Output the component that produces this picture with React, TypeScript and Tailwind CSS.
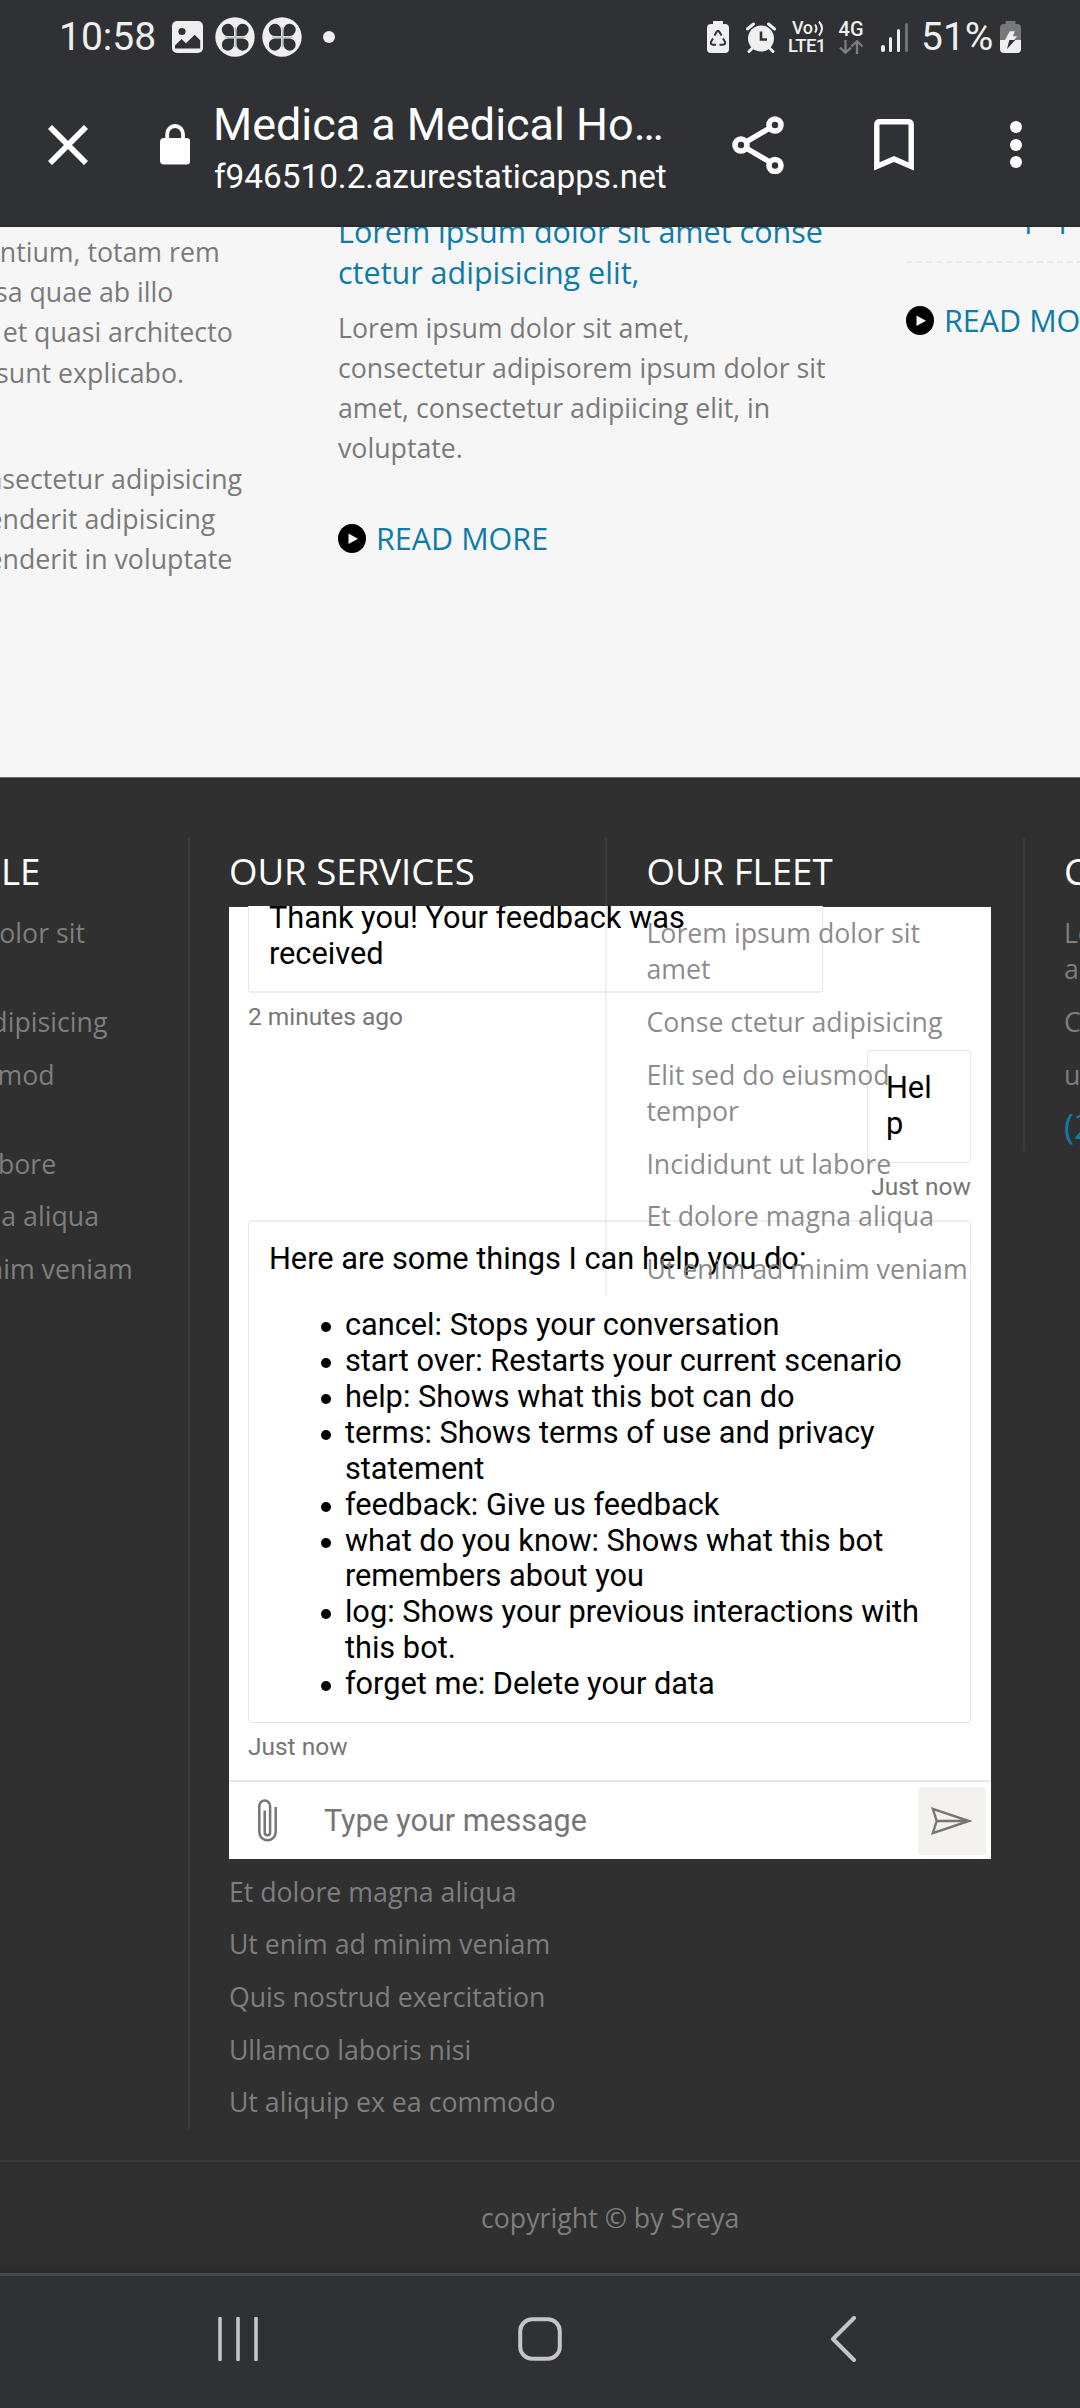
import React from 'react';

const SANS = "font-['Open_Sans',sans-serif]";
const ROBOTO = 'font-[Roboto,sans-serif]';

function Clover({ className }: { className: string }) {
  return (
    <svg viewBox="0 0 40 40" className={`h-[40px] w-[40px] shrink-0 ${className}`}>
      <circle cx="20" cy="20" r="19.7" fill="#efefef" />
      <g fill="#303135">
        <path d="M19 19v-5.500a6.100 6.100 0 1 0-5.500 5.500z" />
        <path d="M21.500 19v-5.500a6.100 6.100 0 1 1 5.500 5.500z" />
        <path d="M19 21.500v5.500a6.100 6.100 0 1 1-5.500-5.500z" />
        <path d="M21.500 21.500v5.500a6.100 6.100 0 1 0 5.500-5.500z" />
      </g>
      <path d="M20.200 10v20.500M10 20.200h20.500" stroke="#9a9b9c" strokeWidth="0.800" />
    </svg>
  );
}

function StatusBar() {
  return (
    <div className="flex h-[74px] items-center pr-[59px] pl-[59px] text-[39px] leading-[40px] text-[#efefef]">
      <span className="w-[97px]">10:58</span>
      <svg viewBox="0 0 31 32" className="ml-4 h-8 w-[31px]">
        <rect width="31" height="32" rx="5" fill="#efefef" />
        <circle cx="10" cy="10.500" r="3.600" fill="#303135" />
        <path d="M3 24.500l6.500-6.500 4.500 4.300 8.700-8.500 5.500 5.500v8.200H3z" fill="#303135" />
      </svg>
      <Clover className="ml-3" />
      <Clover className="ml-[7px]" />
      <span className="ml-[21px] h-3 w-3 rounded-full bg-[#efefef]" />
      <div className="ml-auto flex items-center">
        <svg viewBox="0 0 22 32" className="h-8 w-[22px]">
          <path d="M6 0h10v3h2a4 4 0 0 1 4 4v21a4 4 0 0 1-4 4H4a4 4 0 0 1-4-4V7a4 4 0 0 1 4-4h2z" fill="#efefef" />
          <path
            d="M7.500 14.500l2-3.400q1.500-2 3 0l2 3.400M16 17.500l2 3.300q.800 2.700-2 2.900h-3.500M9 23.700H6q-2.800-.200-2-2.900l2-3.300"
            fill="none"
            stroke="#303135"
            strokeWidth="2"
          />
        </svg>
        <svg viewBox="0 0 30 31" className="ml-[17px] h-[31px] w-[30px]">
          <path d="M1.500 7l6-5M28.500 7l-6-5M3 29.500l4-4M27 29.500l-4-4" stroke="#efefef" strokeWidth="3" strokeLinecap="round" />
          <circle cx="15" cy="16.500" r="13" fill="#efefef" />
          <path d="M15 9.500v8h6" fill="none" stroke="#303135" strokeWidth="2.600" />
        </svg>
        <div className="ml-[12px] flex w-[38px] flex-col font-medium">
          <span className="flex items-center pl-[4px] text-[18px] leading-[18px] tracking-[-0.5px]">
            Vo
            <svg viewBox="0 0 10 17" className="ml-px h-[17px] w-[10px]">
              <path d="M1 4.500q3 4 0 8M5 1.500q6 7 0 14" fill="none" stroke="#efefef" strokeWidth="2" />
            </svg>
          </span>
          <span className="text-[18.5px] leading-[18px] tracking-[-0.6px]">LTE1</span>
        </div>
        <div className="ml-3 flex w-[26px] flex-col items-center">
          <span className="text-[20px] leading-[17px] font-medium">4G</span>
          <svg viewBox="0 0 24 14" className="mt-0.5 h-[14px] w-6">
            <path d="M6.500 0v12.500M1 7.500l5.500 5.300L12 7.500M18 14V1.500M12.500 6.500L18 1.200l5.500 5.300" fill="none" stroke="#7c7d80" strokeWidth="2.300" />
          </svg>
        </div>
        <div className="ml-[17px] flex h-[29px] items-end gap-[4.3px]">
          <i className="h-[7px] w-[3.5px] rounded-full bg-[#efefef]" />
          <i className="h-[15px] w-[3.5px] rounded-full bg-[#efefef]" />
          <i className="h-[23px] w-[3.5px] rounded-full bg-[#efefef]" />
          <i className="h-[29px] w-[3.5px] rounded-full bg-[#707174]" />
        </div>
        <span className="ml-[13px] w-[73px]">51%</span>
        <svg viewBox="0 0 21 32" className="ml-[6px] h-8 w-[21px]">
          <path d="M5.500 0h10v3h1.500a4 4 0 0 1 4 4v12H0V7a4 4 0 0 1 4-4h1.500z" fill="#77787a" />
          <path d="M0 19h21v9a4 4 0 0 1-4 4H4a4 4 0 0 1-4-4z" fill="#efefef" />
          <path d="M9.800 10.300h5l-2 5h4.200L14 19H5z" fill="#efefef" />
          <path d="M9.300 19h6L7 28z" fill="#303135" />
        </svg>
      </div>
    </div>
  );
}

function Toolbar() {
  return (
    <div className="flex h-[141px] items-center pl-12 text-white">
      <svg viewBox="0 0 40 40" className="h-10 w-10">
        <path d="M2 2l36 36M38 2L2 38" stroke="#fff" strokeWidth="5.800" />
      </svg>
      <svg viewBox="0 0 30 40" className="ml-[72px] mb-px h-[41px] w-[30px]">
        <path d="M7.200 15V9.500a7.900 8 0 0 1 15.800 0V15" fill="none" stroke="#fff" strokeWidth="3.800" />
        <rect y="13.500" width="30.500" height="26.500" rx="4" fill="#fff" />
      </svg>
      <div className="mt-[9px] ml-[23px] flex w-[460px] flex-col whitespace-nowrap">
        <span className="text-[44.9px] leading-[50px]">Medica a Medical Ho…</span>
        <span className="mt-[5px] pl-px text-[33.3px] leading-[44px]">f946510.2.azurestaticapps.net</span>
      </div>
      <svg viewBox="0 0 52 58" className="ml-[59px] h-[58px] w-[52px]">
        <path d="M43 9L9 29l34 20" fill="none" stroke="#fff" strokeWidth="5.400" />
        <g fill="#303135" stroke="#fff" strokeWidth="5.600">
          <circle cx="43" cy="9" r="6" />
          <circle cx="9" cy="29" r="6" />
          <circle cx="43" cy="49.500" r="6" />
        </g>
      </svg>
      <svg viewBox="0 0 40 52" className="ml-[90px] h-[52px] w-10">
        <path d="M2.800 47.500V6q0-3.200 3.200-3.200h28q3.200 0 3.200 3.200v41.500L20 40z" fill="none" stroke="#fff" strokeWidth="5.400" />
      </svg>
      <div className="ml-24 flex flex-col gap-[5.5px]">
        <i className="h-3 w-3 rounded-full bg-white" />
        <i className="h-3 w-3 rounded-full bg-white" />
        <i className="h-3 w-3 rounded-full bg-white" />
      </div>
    </div>
  );
}

function ReadMore({ className }: { className: string }) {
  return (
    <div className={`flex items-center text-[30.53px] leading-10 text-[#0f7ba6] ${className}`}>
      <svg viewBox="0 0 28 29" className="mr-[10px] h-[29px] w-7 shrink-0">
        <ellipse cx="14" cy="14.500" rx="14" ry="14.500" fill="#000" />
        <path d="M10.500 9.500v10.500l9.500-5.300z" fill="#f6f6f6" />
      </svg>
      READ MORE
    </div>
  );
}

function Articles() {
  return (
    <section className={`ml-[-230px] flex h-[550px] overflow-hidden whitespace-nowrap text-[#7a7a7a] ${SANS}`}>
      <div className="w-[568px] shrink-0 pt-[5px] text-[26.72px] leading-[40.2px]">
        <p>
          doloremque laudantium, totam rem
          <br />
          aperiam, eaque ipsa quae ab illo
          <br />
          inventore veritatis et quasi architecto
          <br />
          beatae vitae dicta sunt explicabo.
        </p>
        <p className="mt-[66px]">
          dolor sit amet, consectetur adipisicing
          <br />
          elit, sed in reprehenderit adipisicing
          <br />
          elit, sed in reprehenderit in voluptate
        </p>
      </div>
      <div className="w-[567px] shrink-0">
        <h3 className="mt-[-16px] text-[30.53px] leading-[40.5px] text-[#0f7ba6]">
          Lorem ipsum dolor sit amet conse
          <br />
          ctetur adipisicing elit,
        </h3>
        <p className="mt-[16px] text-[26.72px] leading-10">
          Lorem ipsum dolor sit amet,
          <br />
          consectetur adipisorem ipsum dolor sit
          <br />
          amet, consectetur adipiicing elit, in
          <br />
          voluptate.
        </p>
        <ReadMore className="mt-[50px]" />
      </div>
      <div className="w-[480px] shrink-0 pl-px">
        <div className="mt-[-32px] flex h-[68px] gap-[19px] border-b-2 border-dashed border-[#e9e9e9] text-[30.53px] leading-10 text-[#0f7ba6]">
          <span>»</span>
          <span>Ut aliquip ex ea commodo</span>
        </div>
        <ReadMore className="mt-[37px]" />
      </div>
    </section>
  );
}

function Links({ items, className = '' }: { items: React.ReactNode[]; className?: string }) {
  return (
    <ul className={className}>
      {items.map((item, i) => (
        <li key={i} className="py-[8.2px]">
          {item}
        </li>
      ))}
    </ul>
  );
}

function Column({ title, children }: { title: string; children: React.ReactNode }) {
  return (
    <div className="w-[417.5px] shrink-0 border-l-2 border-[rgb(142_142_142/0.12)] pt-[8px] pl-[39.4px] whitespace-nowrap">
      <h4 className="text-[36.64px] leading-[50px] text-white">{title}</h4>
      {children}
    </div>
  );
}

const fleet: React.ReactNode[] = [
  <>
    Lorem ipsum dolor sit
    <br />
    amet
  </>,
  'Conse ctetur adipisicing',
  <>
    Elit sed do eiusmod
    <br />
    tempor
  </>,
  'Incididunt ut labore',
  'Et dolore magna aliqua',
  'Ut enim ad minim veniam',
];

const commands = [
  'cancel: Stops your conversation',
  'start over: Restarts your current scenario',
  'help: Shows what this bot can do',
  'terms: Shows terms of use and privacy statement',
  'feedback: Give us feedback',
  'what do you know: Shows what this bot remembers about you',
  'log: Shows your previous interactions with this bot.',
  'forget me: Delete your data',
];

function Chat() {
  return (
    <div className={`mt-[11px] flex h-[952px] w-[762px] flex-col bg-white text-[30.75px] leading-[36px] whitespace-normal text-black ${ROBOTO}`}>
      <div className="flex h-[873px] flex-col pr-5 pl-[19px]">
        <div className="mt-[-1px] h-[87px] w-[575px] shrink-0 overflow-hidden rounded-b-[4px] border-x border-b-2 border-x-[#e6e6e6] border-b-[#ededed] bg-white pl-5">
          <p className="mt-[-6px]">
            Thank you! Your feedback was
            <br />
            received
          </p>
        </div>
        <span className="mt-[9px] text-[24.5px] leading-[30px] text-[#767676]">2 minutes ago</span>
        <div className="mt-[18px] h-[113px] w-[104px] shrink-0 self-end rounded-[4px] border border-[#e4e4e4] pt-[19px] pl-[18px]">
          Hel
          <br />p
        </div>
        <span className="mt-[9px] self-end text-[24.5px] leading-[30px] text-[#767676]">Just now</span>
        <div className="mt-[18px] h-[503px] shrink-0 rounded-[4px] border border-t-2 border-[#e6e6e6] border-t-[#eeeeee] pt-[19px] pr-5 pl-5">
          <p>Here are some things I can help you do:</p>
          <ul className="mt-[30px] leading-[35.92px]">
            {commands.map((c) => (
              <li key={c} className="flex pl-[52px]">
                <i className="mt-[15px] mr-[14px] h-[10px] w-[10px] shrink-0 rounded-full bg-black" />
                <span className="flex-1">{c}</span>
              </li>
            ))}
          </ul>
        </div>
        <span className="mt-[9px] text-[24.5px] leading-[30px] text-[#767676]">Just now</span>
      </div>
      <div className="flex flex-1 items-center border-t-2 border-[#e8e8e8] pr-[5px] pl-[29px] text-[#767676]">
        <svg viewBox="0 0 19 43" className="h-[43px] w-[19px]">
          <path
            d="M17.700 8V33A8.200 8.200 0 0 1 1.300 33V7A5.400 5.600 0 0 1 12.100 7V33.500A2.700 2.700 0 0 1 6.700 33.500V11.500"
            fill="none"
            stroke="#767676"
            strokeWidth="2.500"
          />
        </svg>
        <span className="ml-[47px] text-[30.5px]">Type your message</span>
        <span className="ml-auto flex h-[68px] w-[68px] items-center justify-center rounded-[4px] bg-[#f3f2f1]">
          <svg viewBox="0 0 41 28" className="h-7 w-[41px]">
            <path d="M1.800 1.800L38 14 1.800 26.200 5.700 14zM5.700 14H37" fill="none" stroke="#767676" strokeWidth="2.400" />
          </svg>
        </span>
      </div>
    </div>
  );
}

function Footer() {
  return (
    <footer className={`flex h-[1496px] flex-col border-t border-[#6b6b6b] bg-[#303030] text-[26.72px] leading-[36.3px] text-[rgb(132_132_132/0.94)] ${SANS}`}>
      <div className="mt-[60px] ml-[-230px] flex h-[1322px] items-start">
        <Column title="OUR PROFILE">
          <Links className="mt-[11px]" items={fleet} />
        </Column>
        <Column title="OUR SERVICES">
          <Chat />
          <Links
            className="mt-[6.5px]"
            items={[
              'Et dolore magna aliqua',
              'Ut enim ad minim veniam',
              'Quis nostrud exercitation',
              'Ullamco laboris nisi',
              'Ut aliquip ex ea commodo',
            ]}
          />
        </Column>
        <Column title="OUR FLEET">
          <Links className="mt-[11px]" items={fleet} />
        </Column>
        <Column title="CONTACT">
          <Links className="mt-[11px]" items={[fleet[0], 'Conse ctetur', 'ut labore']} />
          <p className="text-[34px] leading-[50px] text-[#0f7ba6]">(234) 567</p>
        </Column>
      </div>
      <div className="flex-1 border-t-2 border-[#3a3a3a] pt-[38px] pl-[481px]">copyright © by Sreya</div>
      <div className="h-[10px] bg-linear-to-b from-[#303030] to-[#282928]" />
    </footer>
  );
}

function NavBar() {
  return (
    <nav className="flex h-[135px] items-center border-t-[3px] border-[#494a49] bg-[#303135] pb-[6px] pl-[218px]">
      <svg viewBox="0 0 40 44" className="h-11 w-10">
        <path d="M2 1.500v41M20 1.500v41M38 1.500v41" stroke="#c5c5c7" strokeWidth="3.600" strokeLinecap="round" />
      </svg>
      <svg viewBox="0 0 44 44" className="ml-[260px] h-11 w-11">
        <rect x="2.200" y="2.200" width="39.600" height="39.600" rx="12" fill="none" stroke="#c5c5c7" strokeWidth="4" />
      </svg>
      <svg viewBox="0 0 26 46" className="ml-[268px] h-[46px] w-[26px]">
        <path d="M24 2L3 23l21 21" fill="none" stroke="#c5c5c7" strokeWidth="4" strokeLinecap="round" strokeLinejoin="round" />
      </svg>
    </nav>
  );
}

export default function App() {
  return (
    <div className="h-[2408px] w-[1080px] overflow-hidden bg-[#f6f6f6]">
      <header className={`h-[227px] border-b-2 border-[#2a2b2d] bg-[#303135] ${ROBOTO}`}>
        <StatusBar />
        <Toolbar />
      </header>
      <Articles />
      <Footer />
      <NavBar />
    </div>
  );
}
